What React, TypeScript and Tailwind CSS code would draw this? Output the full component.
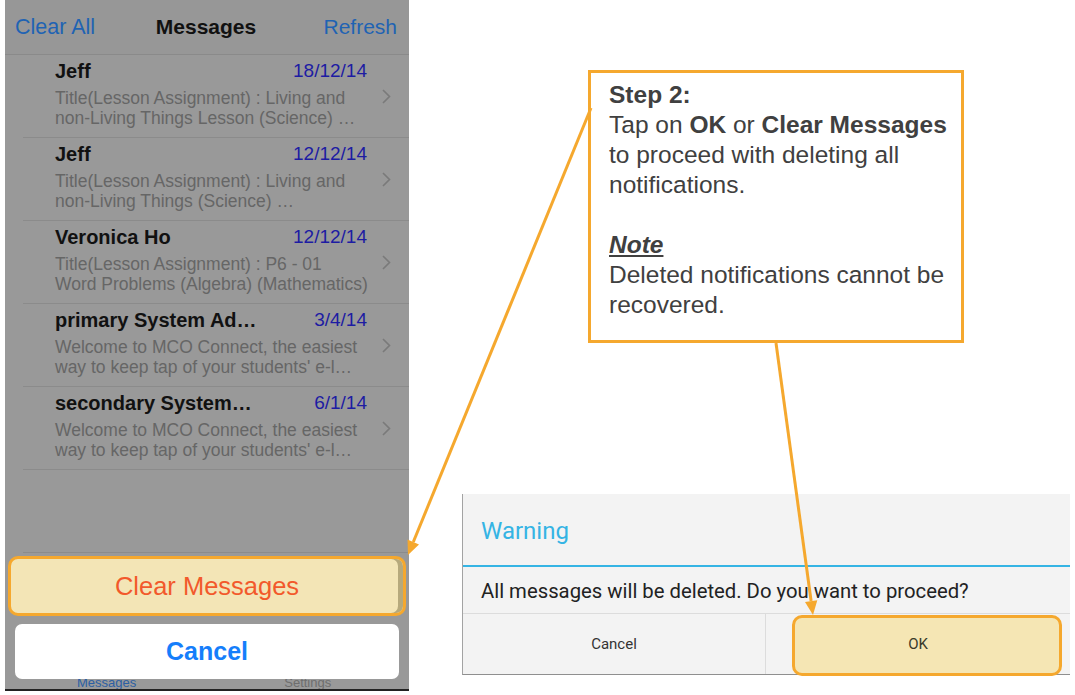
import React from "react";

const rows = [
  { name: "Jeff", date: "18/12/14", l1: "Title(Lesson Assignment) : Living and", l2: "non-Living Things Lesson (Science) …" },
  { name: "Jeff", date: "12/12/14", l1: "Title(Lesson Assignment) : Living and", l2: "non-Living Things (Science) …" },
  { name: "Veronica Ho", date: "12/12/14", l1: "Title(Lesson Assignment) : P6 - 01", l2: "Word Problems (Algebra) (Mathematics)" },
  { name: "primary System Ad…", date: "3/4/14", l1: "Welcome to MCO Connect, the easiest", l2: "way to keep tap of your students' e-l…" },
  { name: "secondary System…", date: "6/1/14", l1: "Welcome to MCO Connect, the easiest", l2: "way to keep tap of your students' e-l…" },
];

function Chevron() {
  return (
    <svg width="9" height="15" viewBox="0 0 9 15" className="shrink-0">
      <path d="M1 1 L7.5 7.5 L1 14" fill="none" stroke="#7a7a7a" strokeWidth="1.6" />
    </svg>
  );
}

function Row({ r }: { r: (typeof rows)[number] }) {
  return (
    <div className="flex flex-col h-[83px]">
      <div className="h-[82px] flex items-center pl-[50px]">
        <div className="w-[312px] flex flex-col pt-[5px] self-start">
          <div className="flex items-center justify-between h-[22px]">
            <span className="text-[20px] font-bold text-[#111] whitespace-nowrap leading-[22px]">{r.name}</span>
            <span className="text-[19px] text-[#1d1ca3] leading-[22px]">{r.date}</span>
          </div>
          <div className="mt-[6px] text-[17.5px] leading-[20px] text-[#666666] whitespace-nowrap">
            <div>{r.l1}</div>
            <div>{r.l2}</div>
          </div>
        </div>
        <div className="ml-[15px] mt-[1px]">
          <Chevron />
        </div>
      </div>
      <div className="h-px bg-[#8b8b8b] ml-[18px]" />
    </div>
  );
}

export default function App() {
  return (
    <div className="relative w-[1075px] h-[695px] bg-white overflow-hidden flex font-['Liberation_Sans',Arial,sans-serif]">
      {/* Phone */}
      <div className="ml-[5px] w-[404px] flex flex-col shrink-0">
        <div className="h-[689px] bg-[#999999] flex flex-col">
          <div className="h-[55px] border-b border-[#8a8a8a] grid grid-cols-[1fr_auto_1fr] items-center pl-[10px] pr-[12px] bg-[#979797]">
            <span className="text-[21.5px] text-[#1f63b3] text-left">Clear All</span>
            <span className="text-[21px] font-semibold text-[#111]">Messages</span>
            <span className="text-[21px] text-[#1f63b3] text-right">Refresh</span>
          </div>
          {rows.map((r, i) => (
            <Row key={i} r={r} />
          ))}
          <div className="flex flex-col h-[83px]">
            <div className="h-[82px]" />
            <div className="h-px bg-[#8b8b8b] ml-[18px]" />
          </div>
          <div className="mt-[3px] mx-[3px] h-[60px] rounded-[10px] border-[3px] border-[#f5a82e] bg-[#f3e5b6] shadow-[inset_-5px_0_0_#b6a97c] flex items-center justify-center">
            <span className="text-[25.5px] text-[#f2592b]">Clear Messages</span>
          </div>
          <div className="mt-[8px] mx-[10px] h-[55px] rounded-[7px] bg-white flex items-center justify-center">
            <span className="text-[25px] font-bold text-[#157efb]">Cancel</span>
          </div>
          <div className="h-[10px] overflow-hidden flex">
            <span className="ml-[72px] mt-[-3px] text-[13px] leading-[13px] text-[#2c5fa3]">Messages</span>
            <span className="ml-[148px] mt-[-3px] text-[13px] leading-[13px] text-[#6e6e6e]">Settings</span>
          </div>
        </div>
        <div className="h-[2px] bg-[#222222]" />
      </div>

      {/* Right side */}
      <div className="flex flex-col">
        <div className="ml-[179px] mt-[70px] w-[376px] h-[273px] border-[3px] border-[#f5a82e] bg-white pl-[18px] pt-[7px] text-[24.5px] leading-[30px] text-[#404040] whitespace-nowrap">
          <div className="font-bold">Step 2:</div>
          <div>
            Tap on <b>OK</b> or <b>Clear Messages</b>
          </div>
          <div>to proceed with deleting all</div>
          <div>notifications.</div>
          <div className="h-[30px]" />
          <div className="font-bold italic underline">Note</div>
          <div>Deleted notifications cannot be</div>
          <div>recovered.</div>
        </div>

        <div className="mt-[151px] ml-[53px] w-[608px] bg-[#f3f3f3] border-l border-[#a3a3a3] border-b border-b-[#8f8f8f] flex flex-col font-['Roboto',sans-serif]">
          <div className="h-[71px] flex items-center pl-[18px] pt-[2px]">
            <span className="text-[24px] text-[#35b4e4]">Warning</span>
          </div>
          <div className="h-[2px] bg-[#35b4e4]" />
          <div className="h-[46px] flex items-center pl-[18px] pt-[3px]">
            <span className="text-[20.3px] text-[#222222] whitespace-nowrap">All messages will be deleted. Do you want to proceed?</span>
          </div>
          <div className="h-px bg-[#dcdcdc]" />
          <div className="h-[60px] flex">
            <div className="w-[302px] flex items-center justify-center text-[15px] text-[#333333]">Cancel</div>
            <div className="relative flex-1 border-l border-[#dcdcdc] flex items-center justify-center text-[15px] text-[#3a3a2a]">
              <div className="absolute left-[26px] top-[1px] w-[270px] h-[61px] rounded-[10px] border-[3px] border-[#f5a82e] bg-[#f5e6b4]" />
              <span className="relative">OK</span>
            </div>
          </div>
        </div>
      </div>

      {/* Arrows */}
      <svg className="absolute inset-0 pointer-events-none" width="1075" height="695" viewBox="0 0 1075 695">
        <line x1="591" y1="108" x2="413.3" y2="542" stroke="#f5a82e" strokeWidth="3" />
        <polygon points="408,555 419,544.5 407.5,539.5" fill="#f5a82e" />
        <line x1="776" y1="343" x2="811.1" y2="601" stroke="#f5a82e" strokeWidth="3" />
        <polygon points="813,615 817.3,600.3 805,602" fill="#f5a82e" />
      </svg>
    </div>
  );
}
